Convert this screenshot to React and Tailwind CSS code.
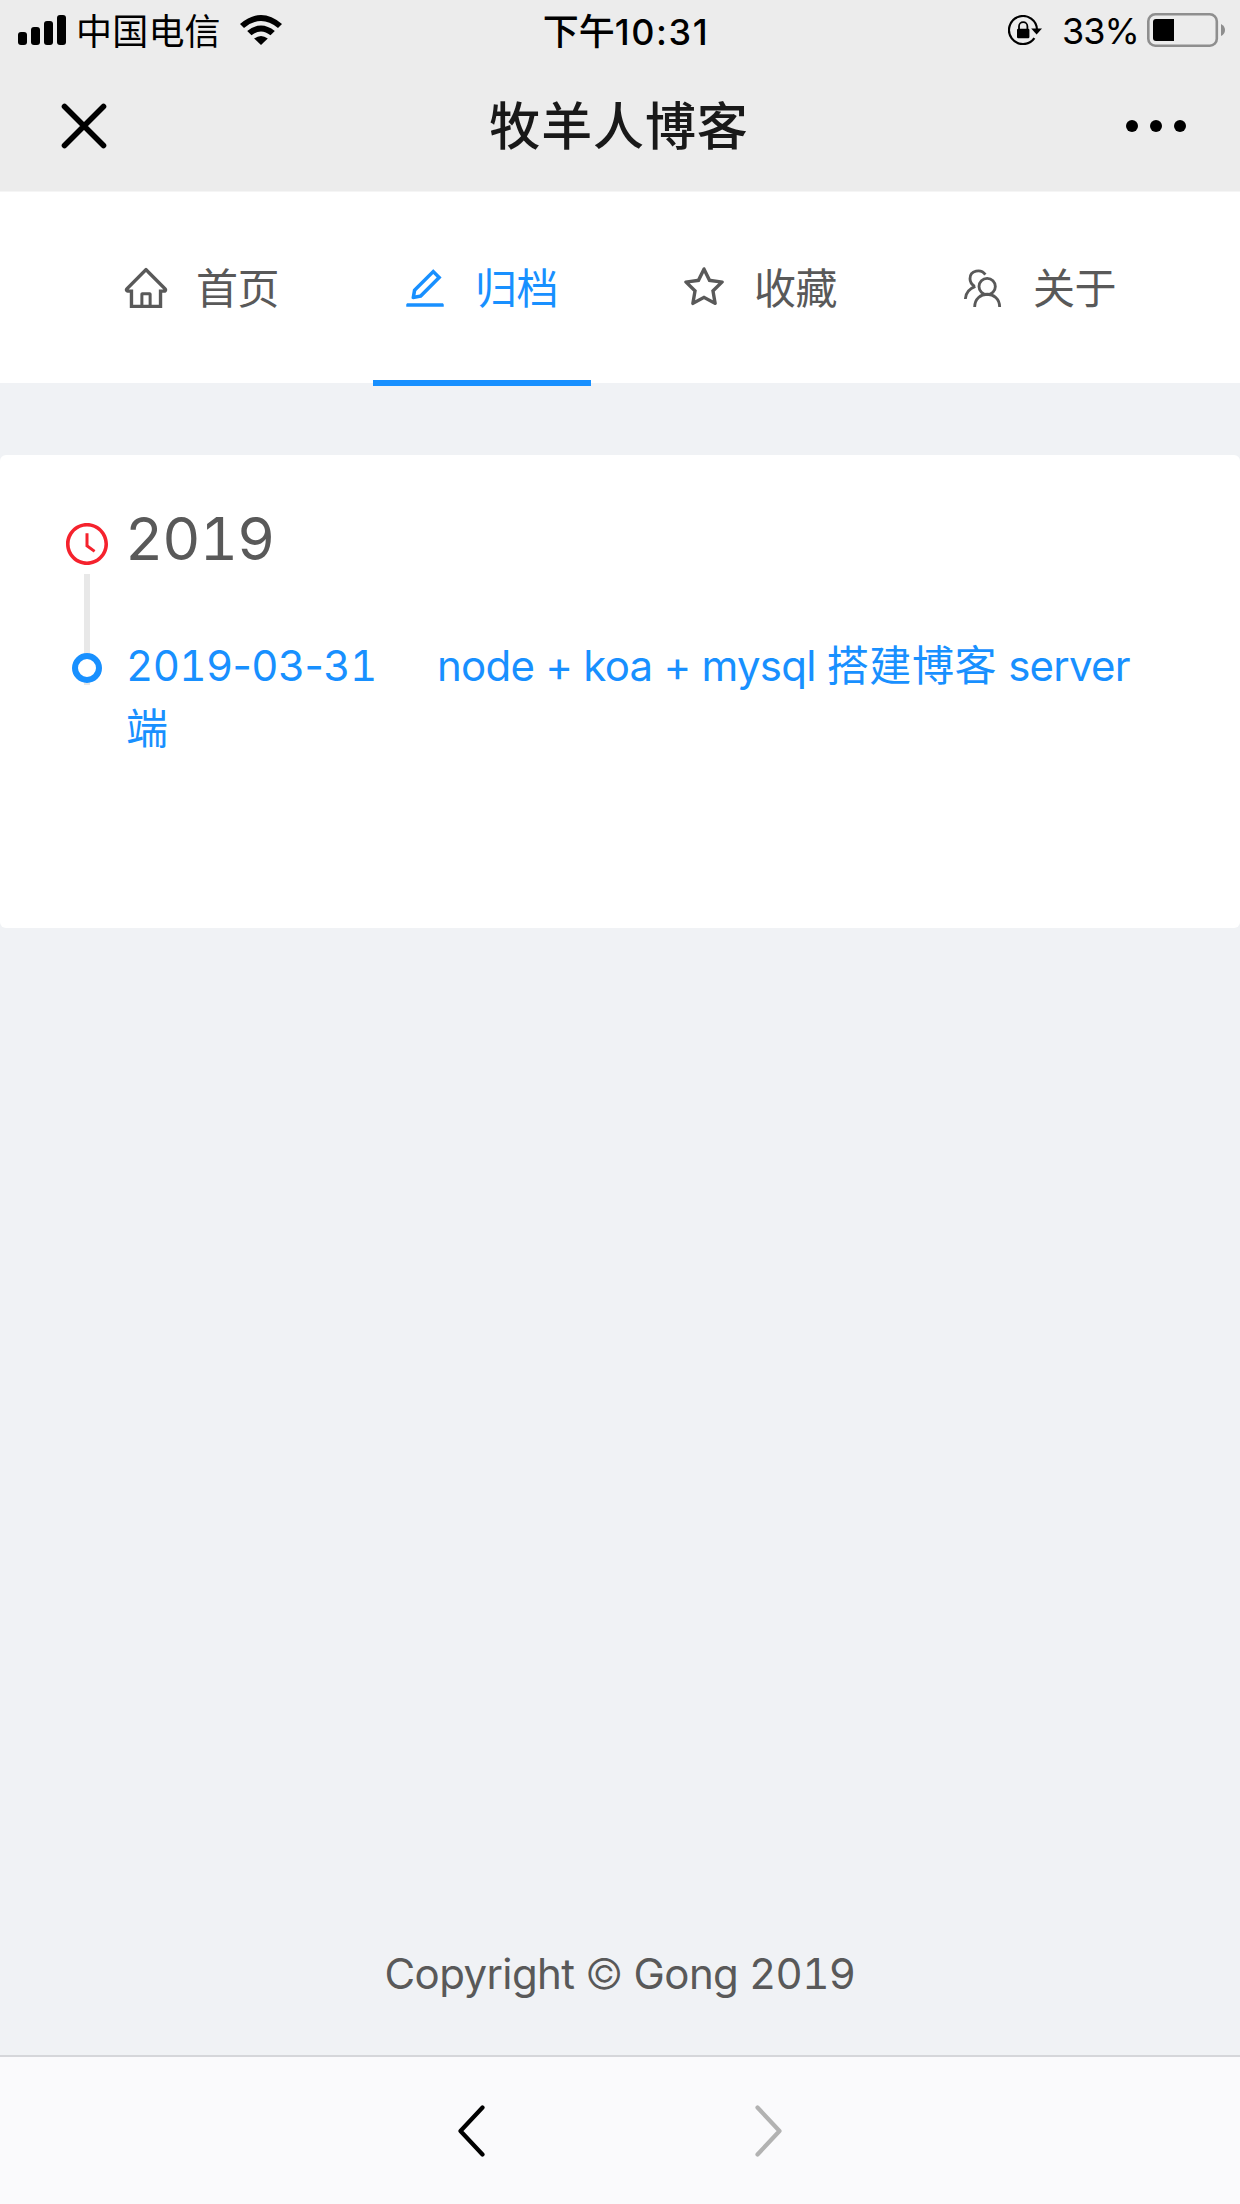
import React from "react";
import {
  AiOutlineHome,
  AiOutlineEdit,
  AiOutlineStar,
  AiOutlineClockCircle,
} from "react-icons/ai";

function SignalIcon() {
  return (
    <svg className="ml-[18px] h-[30px] w-12 shrink-0" viewBox="0 0 48 30">
      <rect x="0" y="17" width="9" height="13" rx="3" />
      <rect x="13" y="12" width="9" height="18" rx="3" />
      <rect x="26" y="6" width="9" height="24" rx="3" />
      <rect x="39" y="0" width="9" height="30" rx="3" />
    </svg>
  );
}

function WifiIcon() {
  return (
    <svg className="ml-[19px] h-[30px] w-[42px] shrink-0" viewBox="0 0 42 30">
      <path d="M0 9Q21 -9 42 9L38 13Q21 -1 4 13Z" />
      <path d="M7.2 16Q21 5 34.8 16L30.5 20.3Q21 12.5 11.5 20.3Z" />
      <path d="M14.2 23.5Q21 18.5 27.8 23.5L21 30Z" />
    </svg>
  );
}

function RotationLockIcon() {
  return (
    <svg className="h-[30px] w-[34px] shrink-0" viewBox="0 0 34 30">
      <path
        d="M29 15A14 14 0 1 0 26.4 23.2"
        fill="none"
        stroke="#000"
        strokeWidth="2.2"
      />
      <path d="M23.2 13.4H34L28.6 19.5Z" />
      <rect x="9" y="13.8" width="12.4" height="9.4" rx="1.2" />
      <path
        d="M11 14.5V11.4A4.2 4.2 0 0 1 19.4 11.4V14.5"
        fill="none"
        stroke="#000"
        strokeWidth="1.8"
      />
    </svg>
  );
}

function BatteryIcon() {
  return (
    <svg className="ml-[8px] h-[34px] w-[78px] shrink-0" viewBox="0 0 78 34">
      <rect
        x="1.3"
        y="1.3"
        width="68.5"
        height="31.4"
        rx="7"
        fill="none"
        stroke="#8e8e8e"
        strokeWidth="2.6"
      />
      <path d="M9 6H27V28H9Q6 28 6 25V9Q6 6 9 6Z" />
      <path d="M74 11Q78 13 78 17T74 23Z" fill="#8e8e8e" />
    </svg>
  );
}

function FriendsIcon({ className }) {
  return (
    <svg
      className={className}
      viewBox="1017 130 144 144"
      fill="none"
      stroke="currentColor"
      strokeWidth="8.5"
    >
      <circle cx="1101.500" cy="197.500" r="24.500" />
      <path d="M1064 259C1064 208 1139 208 1139 259" />
      <path d="M1096 162C1083 143 1050 149 1050 174Q1050 188 1064 197" />
      <path d="M1036 235Q1037 208 1066 197" />
    </svg>
  );
}

const tabs = [
  { label: "首页", Icon: AiOutlineHome },
  { label: "归档", Icon: AiOutlineEdit, active: true },
  { label: "收藏", Icon: AiOutlineStar },
  { label: "关于", Icon: FriendsIcon },
];

function StatusBar() {
  return (
    <div className="grid h-[60px] grid-cols-3 items-center whitespace-nowrap text-[36px]">
      <div className="flex items-center">
        <SignalIcon />
        <span className="mt-[4px] ml-[10px] leading-[56px] tracking-[0.2px]">
          中国电信
        </span>
        <WifiIcon />
      </div>
      <div className="mt-[4px] pl-3 text-center leading-[56px] font-medium">
        下午<span className="tracking-[1.6px]">10:31</span>
      </div>
      <div className="flex items-center justify-end pr-[15px]">
        <RotationLockIcon />
        <span className="mt-[2px] ml-[20px] leading-[58px] tracking-[-0.9px]">
          33%
        </span>
        <BatteryIcon />
      </div>
    </div>
  );
}

function TitleBar() {
  return (
    <div className="flex h-[131px] items-center justify-between pr-[54px] pl-[61px]">
      <svg className="h-[46px] w-[46px]" viewBox="0 0 46 46">
        <path
          d="M3.500 3.500L42.500 42.500M42.500 3.500L3.500 42.500"
          stroke="#000"
          strokeWidth="5.600"
          strokeLinecap="round"
        />
      </svg>
      <h1 className="mt-[3px] ml-[5px] text-[51px] leading-[60px] font-medium tracking-[0.9px] text-[#191919]">
        牧羊人博客
      </h1>
      <div className="flex gap-3">
        <span className="size-3 rounded-full bg-black" />
        <span className="size-3 rounded-full bg-black" />
        <span className="size-3 rounded-full bg-black" />
      </div>
    </div>
  );
}

function Nav() {
  return (
    <nav className="flex h-[191px] gap-[61px] bg-white pl-[94px]">
      {tabs.map(({ label, Icon, active }) => (
        <div
          key={label}
          className={
            active
              ? "-mb-[3px] flex h-[194px] w-[218px] items-start border-b-6 border-[#1890ff] pl-[28px] text-[#1890ff]"
              : "flex h-[191px] w-[218px] items-start pl-[28px] text-[#595959]"
          }
        >
          <Icon className="mt-[72px] h-[48px] w-[48px] shrink-0" />
          <span className="mt-[65px] ml-[26px] leading-[63px] tracking-[-0.4px]">
            {label}
          </span>
        </div>
      ))}
    </nav>
  );
}

function Timeline() {
  return (
    <section className="mt-[72px] flex h-[473px] shrink-0 rounded-md bg-white">
      <div className="ml-[66px] flex w-[42px] flex-col items-center pt-[68px]">
        <AiOutlineClockCircle className="-my-[3px] h-[48px] w-[48px] shrink-0 text-[#f5222d]" />
        <div className="mt-[9px] h-[111px] w-1.5 bg-[#e8e8e8]" />
        <div className="-mt-8 size-[30px] shrink-0 rounded-full border-6 border-[#1890ff] bg-white" />
      </div>
      <div className="ml-[18px] pt-[39px]">
        <h2 className="-ml-px text-[59px] leading-[90px] tracking-[-0.9px] tabular-nums">
          2019
        </h2>
        <div className="mt-[50px] flex leading-[63px] whitespace-pre text-[#1890ff]">
          <span className="w-[311px] tracking-[-0.6px]">
            <span className="tabular-nums">2019</span>-
            <span className="tabular-nums">03</span>-
            <span className="tabular-nums">31</span>
          </span>
          <span className="tracking-[-0.75px]">node + koa + mysql </span>
          <span className="tracking-[0.6px]">搭建博客</span>
          <span className="tracking-[-0.75px]"> server</span>
        </div>
        <div className="leading-[63px] text-[#1890ff]">端</div>
      </div>
    </section>
  );
}

function BrowserBar() {
  return (
    <div className="flex h-[149px] justify-center gap-[270px] border-t-2 border-[#d5d6da] bg-[#fafafc] pt-[48px]">
      <svg className="h-[52px] w-[27px]" viewBox="0 0 27 52" fill="none">
        <path
          d="M24.500 2.500L2.500 26L24.500 49.500"
          stroke="#000"
          strokeWidth="4.200"
          strokeLinecap="round"
          strokeLinejoin="round"
        />
      </svg>
      <svg className="h-[52px] w-[27px]" viewBox="0 0 27 52" fill="none">
        <path
          d="M2.500 2.500L24.500 26L2.500 49.500"
          stroke="#b2b2b2"
          strokeWidth="4.200"
          strokeLinecap="round"
          strokeLinejoin="round"
        />
      </svg>
    </div>
  );
}

export default function App() {
  return (
    <div className="flex h-[2204px] w-[1240px] flex-col overflow-hidden bg-[#f0f2f5] font-['Inter','Noto_Sans_CJK_SC',sans-serif] text-[42px] text-[#595959]">
      <header className="h-[192px] shrink-0 border-b border-[#f5f5f5] bg-[#ececec] text-black">
        <StatusBar />
        <TitleBar />
      </header>
      <Nav />
      <Timeline />
      <footer className="mt-auto mb-[50px] text-center leading-[63px] tracking-[-0.6px] tabular-nums">
        Copyright <span className="font-light">©</span> Gong 2019
      </footer>
      <BrowserBar />
    </div>
  );
}
